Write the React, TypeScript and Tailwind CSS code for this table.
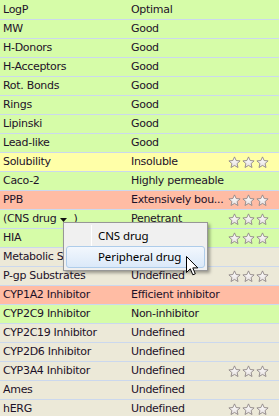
import React from "react";

type Row = { name: React.ReactNode; value: string; bg: string; stars?: boolean };

const GREEN = "bg-[#d6fca8]";
const YELLOW = "bg-[#ffffa8]";
const SALMON = "bg-[#ffbca4]";
const BEIGE = "bg-[#ece9d8]";

function Star() {
  return (
    <svg width="13" height="13" viewBox="0 0 26 26" className="block">
      <defs>
        <linearGradient id="starFill" x1="0" y1="0" x2="0" y2="1">
          <stop offset="0" stopColor="#ffffff" />
          <stop offset="1" stopColor="#e6e0e0" />
        </linearGradient>
      </defs>
      <path
        d="M13 1.8 L16.3 9 L24.2 9.8 L18.2 15.1 L20 23 L13 18.9 L6 23 L7.8 15.1 L1.8 9.8 L9.7 9 Z"
        fill="url(#starFill)"
        stroke="#8f8787"
        strokeWidth="1.8"
        strokeLinejoin="round"
      />
    </svg>
  );
}

function Stars() {
  return (
    <div className="flex gap-[1px]">
      <Star />
      <Star />
      <Star />
    </div>
  );
}

const cnsLabel = (
  <span className="flex items-center">
    (CNS drug
    <svg width="7" height="4" viewBox="0 0 7 4" className="ml-[4px] mr-[6px] mt-[2px]">
      <path d="M0 0 H7 L3.5 4 Z" fill="#111" />
    </svg>
    )
  </span>
);

const rows: Row[] = [
  { name: "LogP", value: "Optimal", bg: GREEN },
  { name: "MW", value: "Good", bg: GREEN },
  { name: "H-Donors", value: "Good", bg: GREEN },
  { name: "H-Acceptors", value: "Good", bg: GREEN },
  { name: "Rot. Bonds", value: "Good", bg: GREEN },
  { name: "Rings", value: "Good", bg: GREEN },
  { name: "Lipinski", value: "Good", bg: GREEN },
  { name: "Lead-like", value: "Good", bg: GREEN },
  { name: "Solubility", value: "Insoluble", bg: YELLOW, stars: true },
  { name: "Caco-2", value: "Highly permeable", bg: GREEN },
  { name: "PPB", value: "Extensively bou...", bg: SALMON, stars: true },
  { name: cnsLabel, value: "Penetrant", bg: GREEN, stars: true },
  { name: "HIA", value: "Well absorbed", bg: GREEN, stars: true },
  { name: "Metabolic Stability", value: "Undefined", bg: BEIGE },
  { name: "P-gp Substrates", value: "Undefined", bg: BEIGE, stars: true },
  { name: "CYP1A2 Inhibitor", value: "Efficient inhibitor", bg: SALMON },
  { name: "CYP2C9 Inhibitor", value: "Non-inhibitor", bg: GREEN },
  { name: "CYP2C19 Inhibitor", value: "Undefined", bg: BEIGE },
  { name: "CYP2D6 Inhibitor", value: "Undefined", bg: BEIGE },
  { name: "CYP3A4 Inhibitor", value: "Undefined", bg: BEIGE, stars: true },
  { name: "Ames", value: "Undefined", bg: BEIGE },
  { name: "hERG", value: "Undefined", bg: BEIGE, stars: true },
];

function Cursor() {
  return (
    <svg width="13" height="21" viewBox="0 0 13 21" className="absolute left-[186px] top-[256px]">
      <path
        d="M0.5 0.5 V16.5 L4.3 12.8 L6.8 18.8 L9.3 17.8 L6.8 11.9 H11.8 Z"
        fill="#ffffff"
        stroke="#000000"
        strokeWidth="1"
        strokeLinejoin="miter"
      />
    </svg>
  );
}

function ContextMenu() {
  return (
    <div className="absolute left-[63px] top-[222px] w-[145px] border border-[#979797] bg-[#f0f0f0] p-[2px] shadow-[2px_2px_3px_rgba(0,0,0,0.35)] [font-family:'Noto_Sans',sans-serif] text-[11.5px] tracking-[-0.1px] text-[#000]">
      <div className="absolute left-[27px] top-[2px] bottom-[2px] w-[1px] bg-[#e2e3e3] border-r border-r-white" />
      <div className="relative flex h-[21px] items-center pl-[32px]">CNS drug</div>
      <div className="relative flex h-[22px] items-center rounded-[3px] border border-[#aeccea] bg-gradient-to-b from-[#f2f7fd] to-[#dbe9f9] pl-[31px]">
        Peripheral drug
      </div>
    </div>
  );
}

export default function App() {
  return (
    <div className="relative h-[416px] w-[279px] overflow-hidden bg-[#ece9d8] [font-family:'DejaVu_Sans',sans-serif] text-[11px] tracking-[-0.3px] text-[#1d1128]">
      <div className="flex flex-col">
        {rows.map((r, i) => (
          <div
            key={i}
            className={`flex h-[19px] items-center border-t ${i === 0 ? "border-t-transparent" : "border-t-[#cbd8ee]"} ${r.bg}`}
          >
            <div className="w-[131px] shrink-0 overflow-hidden whitespace-nowrap pl-[3px]">{r.name}</div>
            <div className="w-[97px] shrink-0 overflow-hidden whitespace-nowrap">{r.value}</div>
            <div className="flex-1">{r.stars ? <Stars /> : null}</div>
          </div>
        ))}
      </div>
      <ContextMenu />
      <Cursor />
    </div>
  );
}
